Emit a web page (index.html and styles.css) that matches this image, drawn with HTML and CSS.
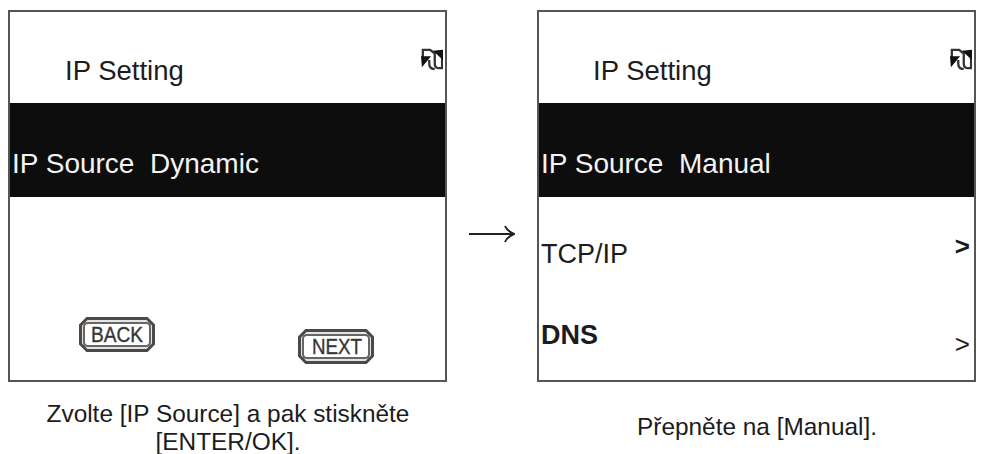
FILE: index.html
```html
<!DOCTYPE html>
<html lang="cs">
<head>
<meta charset="utf-8">
<title>IP Setting</title>
<link rel="stylesheet" href="styles.css">
</head>
<body>
<main class="page">
  <figure class="step">
    <section class="screen">
      <header class="screen-head">
        <span class="title">IP Setting</span>
        <svg class="sync" viewBox="0 0 24 24" aria-hidden="true">
          <path d="M2 11V2H10L15 6V17Q15 22 19 22H23V8" fill="none" stroke="#333" stroke-width="2.500"/>
          <path d="M0 9L11 9L1 21Z M24 2L24 13L13 3Z" fill="#111"/>
          <path d="M9 13V17Q9 23 15 23" fill="none" stroke="#333" stroke-width="2.500"/>
        </svg>
      </header>
      <div class="band"><span class="band-text">IP Source&nbsp; Dynamic</span></div>
      <div class="screen-body buttons">
        <svg class="btn" viewBox="0 0 76 35" role="img" aria-label="BACK">
          <path class="btn-outer" d="M8 1.500H68L74.500 8V27L68 33.500H8L1.500 27V8Z"/>
          <path class="btn-inner" d="M9 6H67Q71 6 71 10V25Q71 29 67 29H9Q5 29 5 25V10Q5 6 9 6Z"/>
          <text class="btn-text" x="38" y="25" textLength="52" lengthAdjust="spacingAndGlyphs">BACK</text>
        </svg>
        <svg class="btn btn-low" viewBox="0 0 76 35" role="img" aria-label="NEXT">
          <path class="btn-outer" d="M8 1.500H68L74.500 8V27L68 33.500H8L1.500 27V8Z"/>
          <path class="btn-inner" d="M9 6H67Q71 6 71 10V25Q71 29 67 29H9Q5 29 5 25V10Q5 6 9 6Z"/>
          <text class="btn-text" x="39" y="25" textLength="50" lengthAdjust="spacingAndGlyphs">NEXT</text>
        </svg>
      </div>
    </section>
    <figcaption class="caption">Zvolte [IP Source] a pak stiskněte<br>[ENTER/OK].</figcaption>
  </figure>

  <div class="arrow-col">
    <svg class="arrow" viewBox="0 0 46 18" aria-hidden="true">
      <path d="M0 9H44" fill="none" stroke="#222" stroke-width="2"/>
      <path d="M36 1Q38 6 45 9Q38 12 36 17" fill="none" stroke="#222" stroke-width="2"/>
    </svg>
  </div>

  <figure class="step">
    <section class="screen">
      <header class="screen-head head-right">
        <span class="title">IP Setting</span>
        <svg class="sync" viewBox="0 0 24 24" aria-hidden="true">
          <path d="M2 11V2H10L15 6V17Q15 22 19 22H23V8" fill="none" stroke="#333" stroke-width="2.500"/>
          <path d="M0 9L11 9L1 21Z M24 2L24 13L13 3Z" fill="#111"/>
          <path d="M9 13V17Q9 23 15 23" fill="none" stroke="#333" stroke-width="2.500"/>
        </svg>
      </header>
      <div class="band"><span class="band-text">IP Source&nbsp; Manual</span></div>
      <div class="screen-body rows">
        <div class="row row-tcp"><span>TCP/IP</span><b class="chev chev-bold">&gt;</b></div>
        <div class="row row-dns"><b>DNS</b><span class="chev chev-thin">&gt;</span></div>
      </div>
    </section>
    <figcaption class="caption caption-right">Přepněte na [Manual].</figcaption>
  </figure>
</main>
</body>
</html>
```

FILE: styles.css
```css
* { box-sizing: border-box; }
html, body { margin: 0; padding: 0; background: #fff; }
body {
  width: 984px;
  height: 454px;
  overflow: hidden;
  font-family: "Liberation Sans", Arial, sans-serif;
  color: #1c1c1c;
}
.page {
  display: flex;
  align-items: flex-start;
  padding: 10px 8px 0 8px;
}
.step { margin: 0; width: 439px; flex: none; }
.screen {
  height: 372px;
  border: 2px solid #555;
  display: flex;
  flex-direction: column;
  background: #fff;
}
.screen-head {
  height: 91px;
  flex: none;
  display: flex;
  align-items: flex-start;
  justify-content: space-between;
  padding: 36px 2px 0 55px;
}
.head-right { padding-left: 54px; }
.title { font-size: 27.5px; line-height: 46px; }
.sync { width: 22px; height: 22px; flex: none; filter: blur(0.3px); }
.band {
  height: 94px;
  flex: none;
  background: #0d0d0d;
  color: #f4f4f4;
  padding: 38px 0 0 2px;
}
.band-text { font-size: 28px; line-height: 46px; white-space: pre; display: block; }
.screen-body { flex: 1; min-height: 0; }
.buttons {
  display: flex;
  justify-content: space-between;
  align-items: flex-start;
  padding: 120px 71px 0 69px;
}
.btn { width: 76px; height: 35px; display: block; flex: none; }
.btn-low { margin-top: 12px; }
.btn-outer { fill: #e4e4e4; stroke: #4a4a4a; stroke-width: 3; }
.btn-inner { fill: #fff; stroke: #666; stroke-width: 2; }
.btn-text {
  font-family: "Liberation Sans", Arial, sans-serif;
  font-size: 22px;
  fill: #333;
  stroke: #444;
  stroke-width: 0.4;
  text-anchor: middle;
}
.rows { display: flex; flex-direction: column; }
.row {
  display: flex;
  justify-content: space-between;
  align-items: flex-start;
  padding: 0 0 0 2px;
  font-size: 27px;
  line-height: 40px;
}
.row-tcp { margin-top: 37px; }
.row-dns { margin-top: 41px; }
.chev { font-size: 26px; line-height: 28px; padding-right: 4px; }
.chev-bold { margin-top: -2px; }
.chev-thin { margin-top: 15px; font-weight: 400; }
.caption {
  margin: 18px 0 0;
  padding-left: 1px;
  text-align: center;
  font-size: 24.4px;
  line-height: 28px;
}
.caption-right { margin-top: 31px; }
.arrow-col { width: 90px; flex: none; display: flex; justify-content: center; padding-top: 215px; }
.arrow { width: 46px; height: 18px; display: block; }
```
